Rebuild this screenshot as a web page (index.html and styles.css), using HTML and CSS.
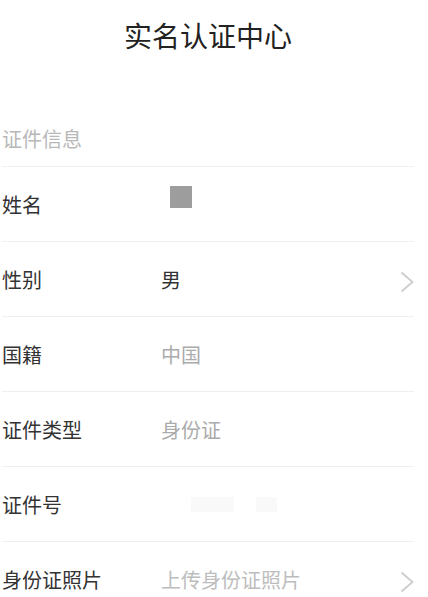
FILE: index.html
```html
<!DOCTYPE html>
<html lang="zh-CN">
<head>
<meta charset="utf-8">
<title>实名认证中心</title>
<link rel="stylesheet" href="styles.css">
</head>
<body>
<div class="page">
  <h1 class="title">实名认证中心</h1>
  <div class="section-head">证件信息</div>
  <div class="row">
    <div class="label">姓名</div>
    <div class="value"><span class="redact-square"></span></div>
  </div>
  <div class="row">
    <div class="label">性别</div>
    <div class="value dark">男</div>
    <svg class="chevron" width="14" height="22" viewBox="0 0 14 22"><polyline points="1.5,1.5 12.5,11 1.5,20.5" fill="none" stroke="#cfcfcf" stroke-width="2"/></svg>
  </div>
  <div class="row">
    <div class="label">国籍</div>
    <div class="value">中国</div>
  </div>
  <div class="row">
    <div class="label">证件类型</div>
    <div class="value">身份证</div>
  </div>
  <div class="row">
    <div class="label">证件号</div>
    <div class="value"><span class="faint faint-a"></span><span class="faint faint-b"></span></div>
  </div>
  <div class="row">
    <div class="label">身份证照片</div>
    <div class="value light">上传身份证照片</div>
    <svg class="chevron" width="14" height="22" viewBox="0 0 14 22"><polyline points="1.5,1.5 12.5,11 1.5,20.5" fill="none" stroke="#cfcfcf" stroke-width="2"/></svg>
  </div>
</div>
</body>
</html>
```
FILE: styles.css
```css
html, body {
  margin: 0;
  padding: 0;
  background: #ffffff;
}
body {
  font-family: "Noto Sans CJK SC", "Noto Sans", sans-serif;
  color: #333333;
}
.page {
  margin: 0 14px 0 2px;
}
.title {
  margin: 0;
  height: 70px;
  display: flex;
  align-items: center;
  justify-content: center;
  font-size: 28px;
  font-weight: 400;
  color: #222222;
}
.section-head {
  margin-top: 42px;
  height: 55px;
  box-sizing: border-box;
  display: flex;
  align-items: center;
  padding-bottom: 2px;
  font-size: 20px;
  color: #b8b8b8;
  border-bottom: 1px solid #efefef;
}
.row {
  height: 75px;
  box-sizing: border-box;
  display: flex;
  align-items: center;
  border-bottom: 1px solid #efefef;
  font-size: 20px;
}
.label {
  width: 159px;
  flex: none;
  color: #333333;
}
.value {
  flex: 1;
  display: flex;
  align-items: center;
  color: #ababab;
}
.value.dark {
  color: #333333;
}
.value.light {
  color: #bdbdbd;
}
.redact-square {
  width: 22px;
  height: 22px;
  margin-left: 9px;
  margin-bottom: 15px;
  background: #9d9d9d;
}
.faint {
  height: 15px;
  background: #f9f9f9;
}
.faint-a {
  width: 43px;
  margin-left: 30px;
}
.faint-b {
  width: 21px;
  margin-left: 22px;
}
.chevron {
  flex: none;
  margin-top: 5px;
}
```
